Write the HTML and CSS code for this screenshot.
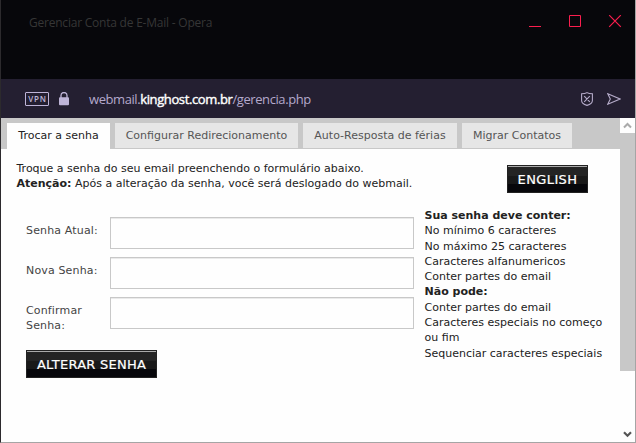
FILE: index.html
```html
<!DOCTYPE html>
<html lang="pt-BR">
<head>
<meta charset="utf-8">
<title>Gerenciar Conta de E-Mail</title>
<link rel="stylesheet" href="styles.css">
</head>
<body>
<div class="window">
  <header class="titlebar">
    <span class="window-title">Gerenciar Conta de E-Mail - Opera</span>
    <svg class="controls" width="94" height="14" viewBox="0 0 94 14" fill="none" stroke="#fa1e4e">
      <path d="M1 11.5h12M41.5 .5h11v11h-11z"/><path stroke-width="1.2" d="M81.200 .2l11.600 11.600M92.800 .2L81.200 11.800"/>
    </svg>
  </header>
  <div class="addressbar">
    <span class="vpn">VPN</span>
    <svg class="lock" width="10" height="14" viewBox="0 0 10 14"><path d="M2 6V3.5a3 3 0 0 1 6 0V6" fill="none" stroke="#beb4d7" stroke-width="1.3"/><rect y="5.3" width="10" height="8" rx="1" fill="#beb4d7"/></svg>
    <span class="url">webmail.<b>kinghost.com.br</b>/gerencia.php</span>
    <svg class="shield" width="12" height="14" viewBox="0 0 12 14" fill="none" stroke="#b5abc9" stroke-width="1.1"><path d="M6 .6C4.600 1.500 2.500 1.800 .6 1.800V8.500C.6 11 3.200 12.600 6 13.400 8.800 12.600 11.400 11 11.400 8.500V1.800C9.500 1.800 7.400 1.500 6 .6zM3.200 4.200l5.600 5.600M8.800 4.200L3.200 9.800"/></svg>
    <svg class="send" width="14" height="12" viewBox="0 0 14 12" fill="none" stroke="#b5abc9" stroke-width="1.1"><path d="M.8 .8L13 6 .8 11.200 3.300 6z"/></svg>
  </div>
  <div class="viewport">
    <main class="page">
      <nav class="tabs">
        <a class="tab tab-active"><span>Trocar a senha</span></a>
        <a class="tab tab-redirect"><span>Configurar Redirecionamento</span></a>
        <a class="tab tab-auto"><span>Auto-Resposta de férias</span></a>
        <a class="tab tab-migrate"><span>Migrar Contatos</span></a>
      </nav>
      <section class="intro">
        <p>Troque a senha do seu email preenchendo o formulário abaixo.<br><b>Atenção:</b> Após a alteração da senha, você será deslogado do webmail.</p>
        <button class="button english">ENGLISH</button>
      </section>
      <div class="columns">
        <form class="form">
          <label class="field"><span>Senha Atual:</span><input type="password"></label>
          <label class="field"><span>Nova Senha:</span><input type="password"></label>
          <label class="field"><span>Confirmar<br>Senha:</span><input type="password"></label>
          <button class="button submit" type="button">ALTERAR SENHA</button>
        </form>
        <aside class="rules">
          <b>Sua senha deve conter:</b><br>No mínimo 6 caracteres<br>No máximo 25 caracteres<br>Caracteres alfanumericos<br>Conter partes do email<br><b>Não pode:</b><br>Conter partes do email<br>Caracteres especiais no começo<br>ou fim<br>Sequenciar caracteres especiais
        </aside>
      </div>
    </main>
    <div class="scrollbar">
      <svg class="up" width="15" height="15" viewBox="0 0 15 15"><path d="M4 9.500L7.500 6 11 9.500" fill="none" stroke="#aaa" stroke-width="2"/></svg>
      <div class="thumb"></div>
      <svg class="down" width="15" height="15" viewBox="0 0 15 15"><path d="M4 5.200L7.500 8.700 11 5.200" fill="none" stroke="#555" stroke-width="2.200"/></svg>
    </div>
  </div>
</div>
</body>
</html>
```
FILE: styles.css
```css
* { box-sizing: border-box; }
body { margin: 0; width: 636px; height: 443px; overflow: hidden; font: 11px/15.4px "DejaVu Sans", sans-serif; color: #222; }
p { margin: 0; }
.window { display: flex; flex-direction: column; height: 443px; border: solid #a5a5a5; border-width: 0 1px 1px; border-left-color: #2c2a2d; }
.titlebar { display: flex; justify-content: space-between; height: 79px; padding: 14px 13px 0 28px; background: #07070b; }
.window-title { font: 12px/18px "Open Sans", sans-serif; color: #363636; white-space: nowrap; letter-spacing: -.22px; }
.controls { margin-top: 1px; }
.addressbar { display: flex; align-items: center; height: 39px; padding: 0 14px 0 24px; background: #241f31; }
.vpn { width: 24px; height: 14px; border: 1px solid #beb4d7; border-radius: 1px; font: 600 8px/12px "Open Sans", sans-serif; letter-spacing: .8px; text-align: center; padding-left: 1px; color: #beb4d7; }
.lock { margin-left: 10px; }
.url { margin-left: 20px; font: 13px/18px "Open Sans", sans-serif; color: #b4a9cc; white-space: nowrap; letter-spacing: -.42px; }
.url b { font-weight: 400; -webkit-text-stroke: .4px #fff; color: #fff; letter-spacing: -.38px; }
.shield { margin-left: auto; }
.send { margin-left: 14px; }
.viewport { display: flex; height: 324px; background: #fefefe; }
.page { width: 619px; }
.tabs { display: flex; gap: 5px; height: 31px; padding: 5px 0 0 6px; background: #c8c8c8; }
.tab { height: 25px; background: #e6e6e6; color: #555; line-height: 26px; text-align: center; white-space: nowrap; }
.tab-active { width: 103px; height: 26px; background: #fefefe; color: #222; }
.tab-redirect { width: 183px; }
.tab-auto { width: 154px; }
.tab-migrate { width: 110px; }
.intro { display: flex; justify-content: space-between; height: 59px; padding: 12px 32px 0 15.5px; white-space: nowrap; }
.button { height: 28px; margin: 0; padding: 2px 0 0; border: 1px solid #222; border-radius: 0; background: linear-gradient(#aaa 0 1px, #242424 1px 10px, #191919 10px 18px, #07070b 18px); color: #fff; font: 13px/24px "DejaVu Sans", sans-serif; letter-spacing: .25px; -webkit-text-stroke: .2px #fff; }
.english { width: 81px; margin-top: 4px; letter-spacing: .4px; }
.columns { display: flex; }
.form { width: 422px; padding: 9px 0 0 25px; }
.field { display: flex; height: 40px; }
.field span { width: 84px; padding-top: 6px; color: #444; letter-spacing: .15px; }
.field input { width: 304px; height: 32px; padding: 0 5px; border: 1px solid #c8c8c8; border-radius: 0; background: #fefefe; box-shadow: inset 0 1px #eaeaea; outline: 0; }
.submit { display: block; width: 131px; margin-top: 13px; }
.rules { width: 195px; white-space: nowrap; padding-left: 1.5px; line-height: 15.3px; }
.scrollbar { display: flex; flex-direction: column; width: 15px; background: #fefefe; }
.thumb { height: 238px; background: #c8c8c8; }
.down { margin-top: auto; }
```
